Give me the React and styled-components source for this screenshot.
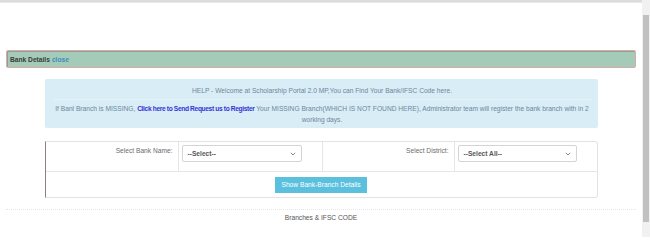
import React from "react";
import styled, { createGlobalStyle } from "styled-components";

const Global = createGlobalStyle`
  html, body { margin: 0; padding: 0; background: #fff; overflow: hidden; }
  body { font-family: "Liberation Sans", Arial, sans-serif; }
  * { box-sizing: border-box; }
`;

const FS = "6.65px";

const Page = styled.div`
  display: flex;
  width: 650px;
  height: 237px;
`;

const Main = styled.div`
  flex: 1;
  display: flex;
  flex-direction: column;
`;

const TopStrip = styled.div`
  height: 3px;
  background: #dcdcdc;
  border-bottom: 1px solid #e8e8e8;
`;

const Panel = styled.div`
  margin: 47px 6px 0;
  height: 18px;
  background: #a3cbb8;
  border: 1px solid #dba9a9;
  box-shadow: inset 1px 1px 0 #8f9f97;
  border-radius: 2px;
  display: flex;
  align-items: center;
  padding-left: 3px;
  font-size: ${FS};
  font-weight: bold;
  color: #3a3a3a;
  gap: 2px;
`;

const CloseLink = styled.a`
  color: #3c8dbc;
  text-decoration: none;
  cursor: pointer;
`;

const Container = styled.div`
  width: 553px;
  margin: 0 auto;
  display: flex;
  flex-direction: column;
`;

const InfoBox = styled.div`
  margin-top: 11px;
  height: 49px;
  background: #d9edf7;
  border-radius: 2px;
  padding: 7px 7px 0 9px;
  color: #6c8799;
  font-size: ${FS};
  text-align: center;
`;

const HelpLine = styled.div`
  line-height: 9px;
  padding-bottom: 4px;
  border-bottom: 1px solid #e6f2f8;
`;

const MissingText = styled.div`
  margin-top: 3px;
  line-height: 11px;
`;

const StrongLink = styled.a`
  color: #3434d4;
  font-weight: bold;
  letter-spacing: -0.36px;
  text-decoration: none;
`;

const Table = styled.div`
  margin-top: 13px;
  border: 1px solid #e3e3e3;
  border-left: 1px solid #8c7f7f;
  border-radius: 0 3px 3px 0;
  display: grid;
  grid-template-columns: 133px 144px 132px 1fr;
`;

const LabelCell = styled.div`
  height: 30px;
  border-right: 1px solid #e6e6e6;
  border-bottom: 1px solid #e6e6e6;
  text-align: right;
  padding: 5px 5px 0 0;
  font-size: ${FS};
  color: #6b6b6b;
`;

const FieldCell = styled.div`
  height: 30px;
  border-right: ${(p) => (p.$last ? "none" : "1px solid #e6e6e6")};
  border-bottom: 1px solid #e6e6e6;
  padding: 3px 20px 0 3px;
`;

const SelectBox = styled.div`
  height: 17px;
  border: 1px solid #d4d4d4;
  border-radius: 2px;
  background: #fff;
  display: flex;
  align-items: center;
  justify-content: space-between;
  padding: 0 5px 0 5px;
  font-size: ${FS};
  font-weight: bold;
  color: #555;
`;

const ButtonRow = styled.div`
  grid-column: 1 / -1;
  height: 25px;
  display: flex;
  justify-content: center;
  align-items: center;
`;

const Button = styled.button`
  width: 92px;
  height: 16px;
  border: none;
  background: #5bc0de;
  color: #fff;
  font-family: "Liberation Sans", Arial, sans-serif;
  font-size: ${FS};
  padding: 0;
  cursor: pointer;
`;

const Footer = styled.div`
  margin: 11px 6px 0;
  border-top: 1px dotted #e6e6e6;
  text-align: center;
  padding-top: 4px;
  font-size: ${FS};
  color: #555;
`;

const Scrollbar = styled.div`
  width: 8px;
  background: #f1f1f1;
  display: flex;
  flex-direction: column;
  padding: 15px 1px 15px 1px;
`;

const Thumb = styled.div`
  flex: 1;
  background: #c1c1c1;
`;

const Chevron = () => (
  <svg width="6" height="4" viewBox="0 0 6 4" fill="none">
    <path d="M0.8 0.8 L3 3 L5.2 0.8" stroke="#777" strokeWidth="0.9" />
  </svg>
);

export default function App() {
  return (
    <>
      <Global />
      <Page>
        <Main>
          <TopStrip />
          <Panel>
            Bank Details <CloseLink>close</CloseLink>
          </Panel>
          <Container>
            <InfoBox>
              <HelpLine>
                HELP - Welcome at Scholarship Portal 2.0 MP,You can Find Your Bank/IFSC Code here.
              </HelpLine>
              <MissingText>
                If Banl Branch is MISSING,{" "}
                <StrongLink>Click here to Send Request us to Register</StrongLink> Your MISSING
                Branch(WHICH IS NOT FOUND HERE), Administrator team will register the bank branch
                with in 2 working days.
              </MissingText>
            </InfoBox>
            <Table>
              <LabelCell>Select Bank Name:</LabelCell>
              <FieldCell>
                <SelectBox>
                  --Select--
                  <Chevron />
                </SelectBox>
              </FieldCell>
              <LabelCell>Select District:</LabelCell>
              <FieldCell $last>
                <SelectBox>
                  --Select All--
                  <Chevron />
                </SelectBox>
              </FieldCell>
              <ButtonRow>
                <Button>Show Bank-Branch Details</Button>
              </ButtonRow>
            </Table>
          </Container>
          <Footer>Branches &amp; IFSC CODE</Footer>
        </Main>
        <Scrollbar>
          <Thumb />
        </Scrollbar>
      </Page>
    </>
  );
}
